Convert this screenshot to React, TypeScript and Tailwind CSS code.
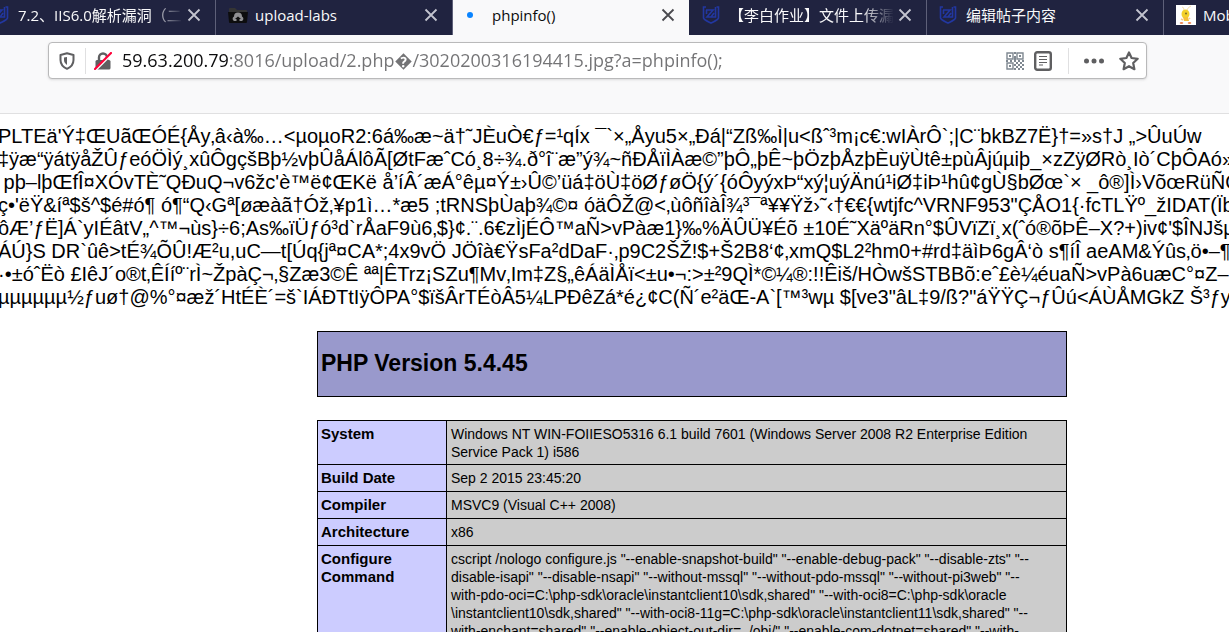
import React from 'react';
import clsx from 'clsx';

type TabData = {
  title: string;
  icon: React.ReactNode;
  active?: boolean;
  fade?: boolean;
};

const ShieldLogo = () => (
  <svg viewBox="0 0 18 18" className="h-[18px] w-[18px] shrink-0" fill="none" stroke="#2237a0" strokeWidth="1.6">
    <path d="M4 1 H1.500 V12 C2 14 6 15.500 9 17 C12 15.500 16 14 16.500 12 V1 H14.500" />
    <path d="M4 4 H11 L5 11 H13.500 V1 M4.500 4 V8 M9 11 L12 7" />
  </svg>
);

const FolderLogo = () => (
  <svg viewBox="0 0 20 16" className="h-4 w-5 shrink-0">
    <path d="M1 2 Q1 1 2 1 H7 L9 3 H18 Q19 3 19 4 V15 H1 Z" fill="#343434" />
    <path d="M0 5 H20 L19 15 Q19 16 18 16 H2 Q1 16 1 15 Z" fill="#0d0d0e" />
    <path d="M6 14 A2.500 2.500 0 0 1 6 9.500 A4 4 0 0 1 14 9.500 A2.500 2.500 0 0 1 14 14 H11.500 V12 H13 L10 9.500 L7 12 H8.500 V14 Z" fill="#8f8f92" />
  </svg>
);

const LoadingDot = () => <span className="ml-0.5 h-1.5 w-1.5 shrink-0 rounded-full bg-[#0a84ff]" />;

const MascotLogo = () => (
  <svg viewBox="0 0 20 20" className="h-5 w-5 shrink-0">
    <rect width="20" height="20" fill="#fff" />
    <path d="M8 5 Q8 2 6 2 M11 5 Q12 2 15 1" stroke="#f7dfae" strokeWidth="1" fill="none" />
    <ellipse cx="9.500" cy="9" rx="4" ry="4.500" fill="#f3d02c" />
    <path d="M7 12 H12 L13 16 H8 Z" fill="#f5c03a" />
    <circle cx="10" cy="8.500" r="1" fill="#7b6a28" />
    <path d="M5 14 L7 15 M13 14 L14 13" stroke="#f6c98c" strokeWidth="1.500" />
    <ellipse cx="5.500" cy="18" rx="1.800" ry="1" fill="#ee8a56" />
    <ellipse cx="13.500" cy="18" rx="1.800" ry="1" fill="#ee8a56" />
  </svg>
);

const tabs: TabData[] = [
  { title: '7.2、IIS6.0解析漏洞（二）', icon: <ShieldLogo />, fade: true },
  { title: 'upload-labs', icon: <FolderLogo /> },
  { title: 'phpinfo()', icon: <LoadingDot />, active: true },
  { title: '【李白作业】文件上传漏洞', icon: <ShieldLogo />, fade: true },
  { title: '编辑帖子内容', icon: <ShieldLogo /> },
  { title: 'Mobile', icon: <MascotLogo /> },
];

const Tab: React.FC<TabData> = ({ title, icon, active, fade }) => (
  <div
    className={clsx(
      'flex h-[35px] w-[237px] shrink-0 items-center border-r pb-[5px] pl-3 pr-3.5',
      active ? 'border-[#202340] bg-[#f9f9fa] text-[#0c0c0d]' : 'border-[#5e6079] bg-[#202340] text-[#f9f9fa]',
    )}
  >
    <div className="flex w-[27px] shrink-0 items-center">{icon}</div>
    <span
      className={clsx(
        'min-w-0 flex-1 overflow-hidden whitespace-nowrap text-[15px] leading-5',
        fade && 'mask-r-from-80% mask-r-to-100%',
      )}
    >
      {title}
    </span>
    <button aria-label="Close tab" className="ml-1 shrink-0">
      <svg viewBox="0 0 14 14" className="h-3.5 w-3.5" stroke={active ? '#4a4a4f' : '#c3c4cf'} strokeWidth="1.8">
        <path d="M1.500 1.500 L12.500 12.500 M12.500 1.500 L1.500 12.500" />
      </svg>
    </button>
  </div>
);

const ShieldIcon = () => (
  <svg viewBox="0 0 16 18" className="h-[18px] w-4" fill="none" stroke="#5f5f61" strokeWidth="2">
    <path d="M8 1.200 L14.500 3 V8 C14.500 12 12 15 8 16.800 C4 15 1.500 12 1.500 8 V3 Z" strokeLinejoin="round" />
    <path d="M8 5 V13 C6 11.500 5 10 5 8 V5.600 Z" fill="#5f5f61" stroke="none" />
  </svg>
);

const InsecureIcon = () => (
  <svg viewBox="0 0 18 18" className="h-[18px] w-[18px]">
    <path d="M5 9 V5.500 A4 4 0 0 1 13 5.500 V9" fill="none" stroke="#5f5f61" strokeWidth="2.400" />
    <rect x="1.500" y="8" width="15" height="9.500" rx="1.500" fill="#5f5f61" />
    <path d="M1.500 18 L17.500 2" stroke="#fff" strokeWidth="2.500" />
    <path d="M1 17 L17 1" stroke="#ff0039" strokeWidth="2.200" strokeLinecap="round" />
  </svg>
);

const QrIcon = () => (
  <svg viewBox="0 0 18 18" className="h-[18px] w-[18px]" fill="none" stroke="#7f8891" strokeWidth="1.400">
    <path d="M1 1 H7 V7 H1 Z M11 1 H17 V7 H11 Z M1 11 H7 V17 H1 Z" />
    <path d="M3 4 H5 M13 4 H15 M3 14 H5" strokeWidth="2" />
    <path d="M9 0 V2 M9 4 V8 M0 9 H2 M4 9 H6 M8 9 H10 M12 9 H14 M16 9 H18 M10 11 H12 M14 11 H16 M8 13 H10 M12 13 H14 M16 13 H18 M10 15 H12 M14 15 H16 M8 17 H10 M12 17 H14 M16 17 H18" strokeWidth="2" />
  </svg>
);

const ReaderIcon = () => (
  <svg viewBox="0 0 18 20" className="h-5 w-[18px]" fill="none" stroke="#5f5f61">
    <rect x="1.200" y="1.200" width="15.600" height="17.600" rx="2" strokeWidth="2.400" />
    <path d="M5 5.500 H13 M5 8.500 H13 M5 11.500 H13 M5 14 H9" strokeWidth="1.100" />
  </svg>
);

const DotsIcon = () => (
  <svg viewBox="0 0 20 6" className="h-1.5 w-5" fill="#5f5f61">
    <circle cx="2.500" cy="3" r="2.500" />
    <circle cx="10" cy="3" r="2.500" />
    <circle cx="17.500" cy="3" r="2.500" />
  </svg>
);

const StarIcon = () => (
  <svg viewBox="0 0 20 20" className="h-5 w-5" fill="none" stroke="#5f5f61" strokeWidth="2.200" strokeLinejoin="round">
    <path d="M10 1.500 L12.600 7 L18.700 7.800 L14.200 12 L15.400 18.200 L10 15.200 L4.600 18.200 L5.800 12 L1.300 7.800 L7.400 7 Z" />
  </svg>
);

const AddressBar = () => (
  <div className="ml-12 mr-[82px] flex h-[37px] items-center rounded-sm border border-[#b9b9ba] bg-white pl-2.5 pr-[7px] shadow-sm">
    <button aria-label="Tracking protection">
      <ShieldIcon />
    </button>
    <span className="ml-2.5 h-[26px] w-px bg-[#e0e0e1]" />
    <button aria-label="Connection is not secure" className="ml-2">
      <InsecureIcon />
    </button>
    <input
      aria-label="Address"
      defaultValue="59.63.200.79:8016/upload/2.php�/3020200316194415.jpg?a=phpinfo();"
      className="ml-2.5 h-8 min-w-0 flex-1 bg-[linear-gradient(to_right,#0c0c0d_107px,#737375_107px)] bg-clip-text pb-0.5 text-[18px] text-transparent outline-none"
    />
    <div className="flex items-center">
      <button aria-label="QR code"><QrIcon /></button>
      <button aria-label="Reader view" className="ml-2.5"><ReaderIcon /></button>
      <span className="ml-4 h-[26px] w-px bg-[#e0e0e1]" />
      <button aria-label="Page actions" className="ml-[15px]"><DotsIcon /></button>
      <button aria-label="Bookmark this page" className="ml-[15px]"><StarIcon /></button>
    </div>
  </div>
);

const binaryLines = [
  `PLTEä'Ý‡ŒUãŒÓÉ{Åy‚â‹à‰…<µoµoR2:6á‰æ~ä†˜JÈuÒ€ƒ=¹qÍx ¯\`×„Åyu5×„Ðá|“Zß‰Ì|u<ßˆ³m¡c€:wIÀrÔ\`;|C¨bkBZ7Ë}†=»s†J „>ÛuÚw`,
  `‡ÿæ“ÿátÿåŽÛƒeóÖÌý¸xûÔgçšBþ½vþÛåÁlôÃ[ØtFæˆCó¸8÷¾.ð°î¨æ”ý¾~ñÐÅïÌÀæ©”þÔ„þÊ~þÖzþÅzþÈuÿÙtê±pùÂjúµiþ_×zZÿØRò¸Iò´CþÔAó»ì`,
  ` pþ–lþŒfÎ¤XÓvTÈ˜QÐuQ¬v6žc'è™ë¢ŒKë å’íÂ´æÁ°êµ¤Ý±›Û©’üá‡öÙ‡öØƒøÖ{ý´{óÔyýxÞ“xý¦uýÄnú¹iØ‡iÞ¹hû¢gÙ§bØœ\`× _ô®]Ì›VõœRüÑO`,
  `ç•'ëŸ&íª$š^$é#ó¶ ó¶“Q‹Gª[øæàã†Óž‚¥p1ì…*æ5 ;tRNSþÙaþ¾©¤ óäÔŽ@<‚ùôñîàÎ¾³¯ª¥¥Ÿž›˜‹†€€{wtjfc^VRNF953"ÇÅO1{·fcTLŸº_žIDAT(Ïb`,
  `ôÆ’ƒË]Á\`yIÉâtV„^™¬ùs}÷6;As‰ïÜƒó³d\`rÅaF9ù6‚$}¢.¨.6€zÌjÉÔ™aÑ>vPàæ1}‰%ÄÛÜ¥Éõ ±10É˜XäºäRn°$ÛVïZï¸x(ˆó®õÞÊ–X?+)iv¢'$ÎNJšµ`,
  `ÁÚ}S DR\`ûê>tÉ¾ÕÛ!Æ²u,uC—t[Úq{jª¤CA*;4x9vÖ JÖîà€ŸsFa²dDaF·‚p9C2ŠŽ!$+Š2B8‘¢‚xmQ$L2²hm0+#rd‡äìÞ6gÂ‘ò s¶íÎ aeAM&Ýûs‚ö•–¶`,
  `·•±óˆËò £IêJ´o®t‚ÊÍíº¨rÌ~ŽpàÇ¬‚§Zæ3©Ê ªª|ÊTrz¡SZu¶Mv‚Im‡Z§„êÁäÌÅï<±u•¬:>±²9QÌ*©¼®:!!Êiš/HÒwšSTBBõ:eˆ£è¼éuaÑ>vPà6uæC°¤Z–·`,
  `µµµµµµ½ƒuø†@%°¤æž´HtÉÈ´=š\`IÁÐTtIÿÔPA°$ïšÂrTÉòÂ5¼LPÐêZá*é¿¢C(Ñ´e²äŒ-A\`[™³wµ $[ve3"âL‡9/ß?"áŸŸÇ¬ƒÛú<ÁÙÅMGkZ Š³ƒyo`,
];

const info = [
  ['System', 'Windows NT WIN-FOIIESO5316 6.1 build 7601 (Windows Server 2008 R2 Enterprise Edition\nService Pack 1) i586'],
  ['Build Date', 'Sep 2 2015 23:45:20'],
  ['Compiler', 'MSVC9 (Visual C++ 2008)'],
  ['Architecture', 'x86'],
  [
    'Configure Command',
    [
      'cscript /nologo configure.js "--enable-snapshot-build" "--enable-debug-pack" "--disable-zts" "--',
      'disable-isapi" "--disable-nsapi" "--without-mssql" "--without-pdo-mssql" "--without-pi3web" "--',
      'with-pdo-oci=C:\\php-sdk\\oracle\\instantclient10\\sdk,shared" "--with-oci8=C:\\php-sdk\\oracle',
      '\\instantclient10\\sdk,shared" "--with-oci8-11g=C:\\php-sdk\\oracle\\instantclient11\\sdk,shared" "--',
      'with-enchant=shared" "--enable-object-out-dir=../obj/" "--enable-com-dotnet=shared" "--with-',
      'mcrypt=static"',
    ].join('\n'),
  ],
];

const PhpInfo = () => (
  <main className="overflow-hidden bg-white pt-[11px] font-['Liberation_Sans',sans-serif] text-black">
    <div className="-ml-0.5 whitespace-pre text-[20px] leading-[23px]">
      {binaryLines.map((line) => (
        <p key={line}>{line}</p>
      ))}
    </div>
    <div className="ml-[155px] mt-[22px] flex flex-col items-center gap-[23px]">
      <header className="flex h-[66px] w-[750px] items-center border border-black bg-[#9999cc] px-[3px] pb-0.5">
        <h1 className="text-[23px] font-bold leading-7">PHP Version 5.4.45</h1>
      </header>
      <table className="w-[750px] border-collapse leading-[18px]">
        <tbody>
          {info.map(([name, value]) => (
            <tr key={name} className="h-[27px]">
              <th scope="row" className="w-[129px] border border-black bg-[#ccccff] px-[3px] pb-[3px] pt-1 text-left align-top text-[15px] font-bold leading-[18px]">
                {name}
              </th>
              <td className="whitespace-pre-line border border-black bg-[#cccccc] px-1 pb-[3px] pt-1 align-top text-[14px] leading-[18px]">
                {value}
              </td>
            </tr>
          ))}
        </tbody>
      </table>
    </div>
  </main>
);

const App = () => (
  <div className="h-screen overflow-hidden bg-white font-['Open_Sans','Noto_Sans_CJK_SC',sans-serif]">
    <nav className="flex overflow-hidden bg-[#202340]">
      <div className="-ml-[21px] flex">
        {tabs.map((tab) => (
          <Tab key={tab.title} {...tab} />
        ))}
      </div>
    </nav>
    <div className="h-[79px] border-b border-[#e0e0e1] bg-[#f9f9fa] pt-[7px]">
      <AddressBar />
    </div>
    <PhpInfo />
  </div>
);

export default App;
